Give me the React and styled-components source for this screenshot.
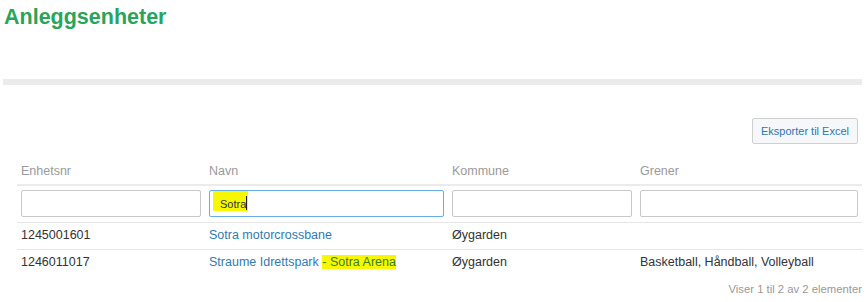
import React from 'react'
import styled, { createGlobalStyle } from 'styled-components'

const GlobalStyle = createGlobalStyle`
  body {
    margin: 0;
    background: #fff;
    font-family: "Liberation Sans", Arial, sans-serif;
    color: #333;
  }
`

const Page = styled.div`
  width: 867px;
  padding-top: 5px;
`

const Title = styled.h1`
  margin: 0 0 0 4px;
  font-size: 21.5px;
  line-height: 24px;
  font-weight: 700;
  color: #29a45a;
`

const Divider = styled.div`
  margin: 50px 0 0 3px;
  width: 859px;
  height: 6px;
  background: #ebebeb;
`

const Toolbar = styled.div`
  display: flex;
  justify-content: flex-end;
  padding: 33px 9px 0 0;
`

const ExportButton = styled.button`
  font-family: inherit;
  font-size: 11px;
  line-height: 16px;
  color: #2a78b4;
  background: #f5f7f9;
  border: 1px solid #d0d0d0;
  border-radius: 2px;
  padding: 4px 8px;
  cursor: pointer;
`

const Table = styled.table`
  margin: 14px 0 0 17px;
  width: 845px;
  table-layout: fixed;
  border-collapse: collapse;
  font-size: 12.5px;
  line-height: 18px;
`

const Th = styled.th`
  text-align: left;
  font-weight: 400;
  color: #9a9a9a;
  padding: 4px;
  border-bottom: 2px solid #ebebeb;
`

const FilterCell = styled.td`
  padding: 4px 4px 5px 4px;
`

const Td = styled.td`
  padding: 3px 4px 5px 4px;
  border-top: 1px solid #e6e6e6;
  white-space: nowrap;
`

const FilterWrap = styled.div`
  position: relative;
  background: #fff;
`

const FilterInput = styled.input`
  position: relative;
  display: block;
  box-sizing: border-box;
  width: 100%;
  height: 27px;
  margin: 0;
  padding: 0 0 0 ${p => (p.$focused ? '10px' : '6px')};
  font-family: inherit;
  font-size: 11px;
  color: #333;
  background: transparent;
  border: 1px solid ${p => (p.$focused ? '#66afe9' : '#c8c8c8')};
  border-radius: 2px;
  outline: none;
`

const InputMark = styled.span`
  position: absolute;
  left: 4px;
  top: 1px;
  width: 35px;
  height: 20px;
  background: #f7f700;
`

const Caret = styled.span`
  position: absolute;
  left: 37px;
  top: 6px;
  width: 1px;
  height: 14px;
  background: #222;
`

const Link = styled.a`
  color: #2f7bb3;
  text-decoration: none;
`

const Highlight = styled.span`
  background: #f7f700;
  color: #3a8021;
`

const Footer = styled.div`
  margin-top: 5px;
  padding-right: 5px;
  text-align: right;
  font-size: 11.3px;
  line-height: 16px;
  color: #999;
`

const columns = [
  { label: 'Enhetsnr', width: 188 },
  { label: 'Navn', width: 243 },
  { label: 'Kommune', width: 188 },
  { label: 'Grener', width: 226 },
]

const rows = [
  { nr: '1245001601', name: 'Sotra motorcrossbane', kommune: 'Øygarden', grener: '' },
  {
    nr: '1246011017',
    name: 'Straume Idrettspark ',
    mark: '- Sotra Arena',
    kommune: 'Øygarden',
    grener: 'Basketball, Håndball, Volleyball',
  },
]

function Filter({ value, focused }) {
  return (
    <FilterWrap>
      {focused && <InputMark />}
      <FilterInput $focused={focused} defaultValue={value} />
      {focused && <Caret />}
    </FilterWrap>
  )
}

export default function App() {
  return (
    <Page>
      <GlobalStyle />
      <Title>Anleggsenheter</Title>
      <Divider />
      <Toolbar>
        <ExportButton>Eksporter til Excel</ExportButton>
      </Toolbar>
      <Table>
        <colgroup>
          {columns.map(c => (
            <col key={c.label} style={{ width: c.width }} />
          ))}
        </colgroup>
        <thead>
          <tr>
            {columns.map(c => (
              <Th key={c.label}>{c.label}</Th>
            ))}
          </tr>
        </thead>
        <tbody>
          <tr>
            <FilterCell><Filter value="" /></FilterCell>
            <FilterCell><Filter value="Sotra" focused /></FilterCell>
            <FilterCell><Filter value="" /></FilterCell>
            <FilterCell><Filter value="" /></FilterCell>
          </tr>
          {rows.map(r => (
            <tr key={r.nr}>
              <Td>{r.nr}</Td>
              <Td>
                <Link href="#">
                  {r.name}
                  {r.mark && <Highlight>{r.mark}</Highlight>}
                </Link>
              </Td>
              <Td>{r.kommune}</Td>
              <Td>{r.grener}</Td>
            </tr>
          ))}
        </tbody>
      </Table>
      <Footer>Viser 1 til 2 av 2 elementer</Footer>
    </Page>
  )
}
